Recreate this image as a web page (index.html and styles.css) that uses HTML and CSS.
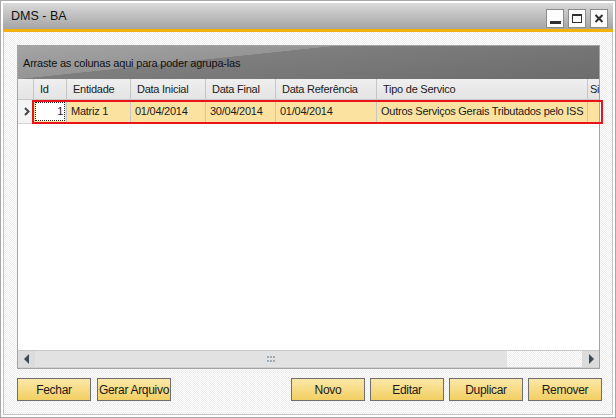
FILE: index.html
```html
<!DOCTYPE html>
<html lang="pt">
<head>
  <meta charset="UTF-8">
  <title>DMS - BA</title>
  <link rel="stylesheet" href="styles.css">
</head>
<body>
  <div class="window">
    <div class="titlebar">
      <div class="title">DMS - BA</div>
      <div class="wbtns">
        <div class="wbtn"><svg width="16" height="17" viewBox="0 0 16 17"><rect x="3" y="11" width="11" height="3" fill="#303030"/></svg></div>
        <div class="wbtn"><svg width="16" height="17" viewBox="0 0 16 17"><rect x="3.5" y="4.5" width="9" height="8" fill="none" stroke="#303030"/><rect x="3" y="4" width="10" height="2" fill="#303030"/></svg></div>
        <div class="wbtn"><svg width="16" height="17" viewBox="0 0 16 17"><path d="M4.5 5 L11.5 12 M11.5 5 L4.5 12" stroke="#303030" stroke-width="2"/></svg></div>
      </div>
    </div>

    <div class="content">
      <div class="grid">
        <div class="group-panel">Arraste as colunas aqui para poder agrupa-las</div>

        <div class="hrow">
          <div class="c ind"></div>
          <div class="c w-id">Id</div>
          <div class="c w-ent">Entidade</div>
          <div class="c w-di">Data Inicial</div>
          <div class="c w-df">Data Final</div>
          <div class="c w-dr">Data Referência</div>
          <div class="c w-ts">Tipo de Servico</div>
          <div class="c w-si">Si</div>
        </div>

        <div class="drow">
          <div class="c ind"><svg width="8" height="9" viewBox="0 0 8 9"><path d="M2 1 L5.5 4.5 L2 8" fill="none" stroke="#404850" stroke-width="2"/></svg></div>
          <div class="c w-id"><span class="focus">1</span></div>
          <div class="c w-ent">Matriz 1</div>
          <div class="c w-di">01/04/2014</div>
          <div class="c w-df">30/04/2014</div>
          <div class="c w-dr">01/04/2014</div>
          <div class="c w-ts">Outros Serviços Gerais Tributados pelo ISS</div>
          <div class="c w-si"></div>
          <div class="sel"></div>
        </div>

        <div class="empty"></div>

        <div class="hscroll">
          <div class="sbtn"><svg width="8" height="10" viewBox="0 0 8 10"><path d="M6 0 L1 5 L6 10 Z" fill="#3c4a56"/></svg></div>
          <div class="track">
            <svg width="8" height="6" viewBox="0 0 8 6"><g fill="#9fa9b4"><rect x="0" y="0" width="2" height="2"/><rect x="3" y="0" width="2" height="2"/><rect x="6" y="0" width="2" height="2"/><rect x="0" y="4" width="2" height="2"/><rect x="3" y="4" width="2" height="2"/><rect x="6" y="4" width="2" height="2"/></g></svg>
          </div>
          <div class="gap"></div>
          <div class="sbtn"><svg width="8" height="10" viewBox="0 0 8 10"><path d="M2 0 L7 5 L2 10 Z" fill="#3c4a56"/></svg></div>
        </div>
      </div>

      <div class="actions">
        <div class="btn">Fechar</div>
        <div class="btn">Gerar Arquivo</div>
        <div class="spacer"></div>
        <div class="btn">Novo</div>
        <div class="btn">Editar</div>
        <div class="btn">Duplicar</div>
        <div class="btn">Remover</div>
      </div>
    </div>
  </div>
</body>
</html>
```

FILE: styles.css
```css
body {
  margin: 0;
  background: #fff;
  font-family: 'Liberation Sans', Arial, sans-serif;
  font-size: 11px;
  color: #1a1a1a;
}

.window {
  width: 616px;
  height: 418px;
  box-sizing: border-box;
  border: 1px solid #a8a8a8;
  padding: 2px;
  display: flex;
  flex-direction: column;
}

.titlebar {
  height: 25px;
  border-bottom: 3px solid #f3b10c;
  background: linear-gradient(#dadada, #a4a4a4);
  display: flex;
  align-items: flex-end;
  padding: 0 5px 1px 8px;
}

.title {
  align-self: center;
  font-size: 12.5px;
  color: #111;
  flex: 1;
}

.wbtns {
  display: flex;
  gap: 4px;
}

.wbtn {
  width: 16px;
  height: 17px;
  border: 1px solid #8c8c8c;
  background: #fdfdfd;
}

.wbtn svg {
  display: block;
}

.content {
  flex: 1;
  border: 1px solid #c4c4c4;
  border-top: none;
  padding: 13px 0 0 13px;
  background: repeating-conic-gradient(#ececec 0 25%, #fff 0 50%) 0 0 / 2px 2px;
}

.grid {
  width: 583px;
  height: 324px;
  box-sizing: border-box;
  border: 1px solid #a4a4a4;
  background: #fff;
  display: flex;
  flex-direction: column;
}

.group-panel {
  height: 33px;
  box-sizing: border-box;
  padding: 11px 0 0 5px;
  color: #111;
  letter-spacing: -0.2px;
  background: linear-gradient(174deg, #a4a4a4 0, #959595 35%, #7e7e7e 35.5%, #6c6c6c 100%);
}

.hrow, .drow {
  display: flex;
  position: relative;
  letter-spacing: -0.25px;
}

.hrow {
  height: 20px;
  background: linear-gradient(#efefef, #e4e4e4);
  border-bottom: 1px solid #c8c8c8;
}

.hrow .c {
  padding: 4px 0 0 6px;
}

.hrow .w-si {
  padding-left: 2px;
}

.drow {
  height: 23px;
  background: #fbe2a1;
  border-bottom: 1px solid #d6d6d6;
}

.drow .c {
  padding: 5px 0 0 4px;
}

.c {
  box-sizing: border-box;
  border-right: 1px solid #c6c6c6;
  white-space: nowrap;
  overflow: hidden;
}

.ind { width: 16px; }
.w-id { width: 33px; }
.w-ent { width: 64px; }
.w-di { width: 75px; }
.w-df { width: 70px; }
.w-dr { width: 101px; }
.w-ts { width: 211px; }
.w-si { flex: 1; border-right: none; }

.drow .ind {
  background: #f4f4f4;
  padding: 7px 0 0 5px;
}

.drow .ind svg {
  display: block;
}

.drow .w-id {
  padding: 2px 1px 2px 1px;
}

.focus {
  display: block;
  height: 100%;
  box-sizing: border-box;
  background: #fff;
  border: 1px dotted #222;
  text-align: right;
  padding: 2px 1px 0 0;
}

.sel {
  position: absolute;
  left: 14px;
  right: -4px;
  top: 0;
  bottom: -1px;
  border: 2px solid #e8141c;
}

.empty {
  flex: 1;
}

.hscroll {
  height: 16px;
  display: flex;
  border-top: 1px solid #c8c8c8;
  border-bottom: 1px solid #d0d0d0;
}

.sbtn {
  width: 17px;
  background: #dcdcdc;
  display: flex;
  align-items: center;
  justify-content: center;
}

.track {
  width: 472px;
  background: #e2e2e2;
  display: flex;
  align-items: center;
  justify-content: center;
}

.gap {
  flex: 1;
  background: repeating-conic-gradient(#ececec 0 25%, #fff 0 50%) 0 0 / 2px 2px;
}

.actions {
  width: 585px;
  display: flex;
  gap: 6px;
  margin-top: 9px;
}

.spacer {
  flex: 1;
}

.btn {
  width: 74px;
  height: 23px;
  box-sizing: border-box;
  border: 1px solid #6e6e6e;
  background: linear-gradient(#fbe7a8, #f2cf62);
  font-size: 12px;
  letter-spacing: -0.3px;
  display: flex;
  align-items: center;
  justify-content: center;
}

.actions .btn:nth-child(n+5) {
  margin-left: -1px;
}
```
